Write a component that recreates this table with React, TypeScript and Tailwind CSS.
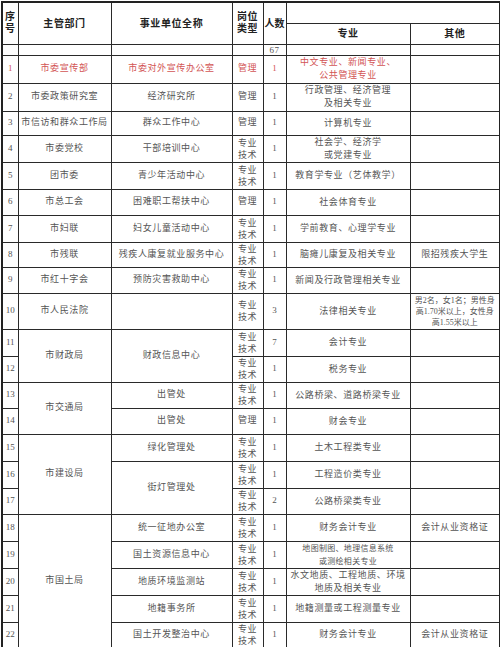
const font = { fontFamily: '"Liberation Serif", "Noto Sans CJK SC", serif' };

type Row = {
  n: number;
  h: number;
  dept?: string;
  deptSpan?: number;
  unit?: string;
  unitSpan?: number;
  type: string;
  count: string;
  major: string[];
  other?: string[];
  red?: boolean;
  small?: boolean;
};

const rows: Row[] = [
  { n: 1, h: 28, dept: '市委宣传部', unit: '市委对外宣传办公室', type: '管理', count: '1', major: ['中文专业、新闻专业、', '公共管理专业'], red: true },
  { n: 2, h: 28, dept: '市委政策研究室', unit: '经济研究所', type: '管理', count: '1', major: ['行政管理、经济管理', '及相关专业'] },
  { n: 3, h: 24, dept: '市信访和群众工作局', unit: '群众工作中心', type: '管理', count: '1', major: ['计算机专业'] },
  { n: 4, h: 27, dept: '市委党校', unit: '干部培训中心', type: '专业技术', count: '1', major: ['社会学、经济学', '或党建专业'] },
  { n: 5, h: 27, dept: '团市委', unit: '青少年活动中心', type: '专业技术', count: '1', major: ['教育学专业（艺体教学）'] },
  { n: 6, h: 26, dept: '市总工会', unit: '困难职工帮扶中心', type: '管理', count: '1', major: ['社会体育专业'] },
  { n: 7, h: 27, dept: '市妇联', unit: '妇女儿童活动中心', type: '专业技术', count: '1', major: ['学前教育、心理学专业'] },
  { n: 8, h: 25, dept: '市残联', unit: '残疾人康复就业服务中心', type: '专业技术', count: '1', major: ['脑瘫儿康复及相关专业'], other: ['限招残疾大学生'] },
  { n: 9, h: 26, dept: '市红十字会', unit: '预防灾害救助中心', type: '专业技术', count: '1', major: ['新闻及行政管理相关专业'] },
  { n: 10, h: 36, dept: '市人民法院', unit: '', type: '专业技术', count: '3', major: ['法律相关专业'], other: ['男2名，女1名；男性身', '高1.70米以上，女性身', '高1.55米以上'] },
  { n: 11, h: 27, dept: '市财政局', deptSpan: 2, unit: '财政信息中心', unitSpan: 2, type: '专业技术', count: '7', major: ['会计专业'] },
  { n: 12, h: 26, type: '专业技术', count: '1', major: ['税务专业'] },
  { n: 13, h: 26, dept: '市交通局', deptSpan: 2, unit: '出管处', type: '专业技术', count: '1', major: ['公路桥梁、道路桥梁专业'] },
  { n: 14, h: 26, unit: '出管处', type: '管理', count: '1', major: ['财会专业'] },
  { n: 15, h: 27, dept: '市建设局', deptSpan: 3, unit: '绿化管理处', type: '专业技术', count: '1', major: ['土木工程类专业'] },
  { n: 16, h: 27, unit: '街灯管理处', unitSpan: 2, type: '专业技术', count: '1', major: ['工程造价类专业'] },
  { n: 17, h: 26, type: '专业技术', count: '2', major: ['公路桥梁类专业'] },
  { n: 18, h: 27, dept: '市国土局', deptSpan: 5, unit: '统一征地办公室', type: '专业技术', count: '1', major: ['财务会计专业'], other: ['会计从业资格证'] },
  { n: 19, h: 26, unit: '国土资源信息中心', type: '专业技术', count: '1', major: ['地图制图、地理信息系统', '或测绘相关专业'], small: true },
  { n: 20, h: 26, unit: '地质环境监测站', type: '专业技术', count: '1', major: ['水文地质、工程地质、环境', '地质及相关专业'] },
  { n: 21, h: 27, unit: '地籍事务所', type: '专业技术', count: '1', major: ['地籍测量或工程测量专业'] },
  { n: 22, h: 26, unit: '国土开发整治中心', type: '专业技术', count: '1', major: ['财务会计专业'], other: ['会计从业资格证'] },
];

const cell = 'border border-[#2a2a2a] p-0 text-center align-middle';

function TypeCell({ type }: { type: string }) {
  if (type === '管理') return <span>管理</span>;
  return (
    <span className="block leading-[12px]">
      专业
      <br />
      技术
    </span>
  );
}

export default function App() {
  return (
    <div className="w-[500px] h-[647px] bg-white pl-[1px] pt-[1px]" style={font}>
      <table className="table-fixed border-collapse border-2 border-[#222] w-[498px] text-[9px] text-[#555] tracking-[0.6px]">
        <colgroup>
          <col className="w-[16px]" />
          <col className="w-[93px]" />
          <col className="w-[121px]" />
          <col className="w-[31px]" />
          <col className="w-[23px]" />
          <col className="w-[124px]" />
          <col className="w-[90px]" />
        </colgroup>
        <thead className="font-bold text-[#222] text-[10px]">
          <tr className="h-[21px]">
            <th rowSpan={2} className={`${cell} leading-[12px]`}>
              序<br />号
            </th>
            <th rowSpan={2} className={cell}>主管部门</th>
            <th rowSpan={2} className={cell}>事业单位全称</th>
            <th rowSpan={2} className={`${cell} leading-[12px]`}>
              岗位<br />类型
            </th>
            <th rowSpan={2} className={`${cell} tracking-normal`}>人数</th>
            <th colSpan={2} className={cell}></th>
          </tr>
          <tr className="h-[21px]">
            <th className={cell}>专业</th>
            <th className={cell}>其他</th>
          </tr>
        </thead>
        <tbody>
          <tr className="h-[11px] text-[9px] leading-[10px]">
            <td className={cell}></td>
            <td className={cell}></td>
            <td className={cell}></td>
            <td className={cell}></td>
            <td className={cell}>67</td>
            <td className={cell}></td>
            <td className={cell}></td>
          </tr>
          {rows.map((r) => (
            <tr key={r.n} style={{ height: r.h }} className={r.red ? 'text-[#d25454]' : ''}>
              <td className={`${cell} tracking-normal`}>{r.n}</td>
              {r.dept !== undefined && (
                <td rowSpan={r.deptSpan ?? 1} className={cell}>
                  {r.dept}
                </td>
              )}
              {r.unit !== undefined && (
                <td rowSpan={r.unitSpan ?? 1} className={cell}>
                  {r.unit}
                </td>
              )}
              <td className={cell}>
                <TypeCell type={r.type} />
              </td>
              <td className={`${cell} tracking-normal`}>{r.count}</td>
              <td className={`${cell} ${r.small ? 'text-[8px] tracking-[0.3px]' : ''} leading-[13px]`}>
                {r.major.map((m, i) => (
                  <div key={i}>{m}</div>
                ))}
              </td>
              <td className={`${cell} ${r.other && r.other.length > 1 ? 'text-[8px] leading-[11px] tracking-normal' : ''}`}>
                {r.other?.map((o, i) => (
                  <div key={i}>{o}</div>
                ))}
              </td>
            </tr>
          ))}
        </tbody>
      </table>
    </div>
  );
}
